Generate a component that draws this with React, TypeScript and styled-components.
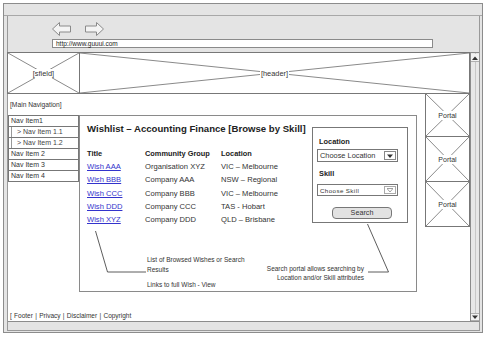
import React from "react";
import styled, { createGlobalStyle } from "styled-components";

const GlobalStyle = createGlobalStyle`
  html, body { margin: 0; padding: 0; background: #fff; }
  body { font-family: "Liberation Sans", Arial, sans-serif; color: #333; }
  * { box-sizing: border-box; }
`;

const Window = styled.div`
  margin: 3px 0 0 3px;
  width: 480px;
  height: 330px;
  border: 1px solid #8c8c8c;
  background: #e4e4e4;
  display: flex;
  flex-direction: column;
`;

const TitleBar = styled.div`
  height: 12px;
  border-bottom: 1px solid #a8a8a8;
`;

const Frame = styled.div`
  flex: 1;
  margin: 0 2px 1px 3px;
  border-left: 1px solid #999;
  border-right: 1px solid #999;
  border-bottom: 1px solid #999;
  display: flex;
  flex-direction: column;
`;

const Toolbar = styled.div`
  height: 36px;
  padding: 6px 0 0 44px;
  display: flex;
  flex-direction: column;
`;

const Arrows = styled.div`
  display: flex;
  gap: 14px;
  height: 14px;
`;

const UrlBox = styled.div`
  margin-top: 3px;
  width: 381px;
  height: 9px;
  border: 1px solid #8a8a8a;
  background: #fff;
  font-size: 6.5px;
  line-height: 7px;
  padding-left: 3px;
  color: #222;
`;

const Viewport = styled.div`
  flex: 1;
  display: flex;
  border-top: 1px solid #8c8c8c;
  min-height: 0;
`;

const Page = styled.div`
  flex: 1;
  background: #fff;
  display: flex;
  flex-direction: column;
`;

const VScroll = styled.div`
  width: 9px;
  border-left: 1px solid #8c8c8c;
  background: linear-gradient(to right, #e8e8e8 0 4px, #c8c8c8 4px 5px, #e8e8e8 5px);
  display: flex;
  flex-direction: column;
  justify-content: space-between;
  padding: 1px 0 0 0;
`;

const ScrollBtn = styled.div<{ $down?: boolean }>`
  height: 8px;
  background: #f2f2f2;
  border-bottom: 1px solid #b0b0b0;
  border-top: 1px solid ${(p) => (p.$down ? "#b0b0b0" : "transparent")};
  display: flex;
  align-items: center;
  justify-content: center;
`;

const HBar = styled.div`
  height: 9px;
  border-top: 1px solid #8c8c8c;
  background: #e4e4e4;
`;

const CrossBox = styled.div<{ $w?: number; $h?: number }>`
  position: relative;
  border: 1px solid #777;
  display: flex;
  align-items: center;
  justify-content: center;
  ${(p) => (p.$w ? `width: ${p.$w}px;` : "flex: 1;")}
  ${(p) => (p.$h ? `height: ${p.$h}px; flex: none;` : "")}
`;

const CrossLines = styled.svg`
  position: absolute;
  inset: 0;
  width: 100%;
  height: 100%;
`;

const BoxLabel = styled.span<{ $size?: number }>`
  position: relative;
  background: #fff;
  font-size: ${(p) => p.$size ?? 7}px;
  line-height: 9px;
  color: #333;
  padding: 0 1px;
`;

const HeaderRow = styled.div`
  height: 42px;
  display: flex;
  margin-left: -1px;
  margin-top: -1px;
`;

const Main = styled.div`
  flex: 1;
  display: flex;
`;

const LeftArea = styled.div`
  width: 417px;
  display: flex;
  flex-direction: column;
`;

const NavLabel = styled.div`
  margin-top: 7px;
  padding-left: 2px;
  height: 8px;
  font-size: 6.7px;
  line-height: 8px;
  color: #333;
`;

const Body = styled.div`
  margin-top: 6px;
  display: flex;
  align-items: flex-start;
`;

const Nav = styled.div`
  width: 71px;
  display: flex;
  flex-direction: column;
`;

const NavItem = styled.div<{ $sub?: boolean }>`
  height: 12px;
  margin-top: -1px;
  border: 1px solid #777;
  font-size: 7px;
  line-height: 10px;
  padding-left: ${(p) => (p.$sub ? 8 : 2)}px;
  color: ${(p) => (p.$sub ? "#444" : "#333")};
  box-shadow: ${(p) => (p.$sub ? "inset 2px 0 0 #fff, inset 3px 0 0 #999" : "none")};
  &:first-child { margin-top: 0; }
`;

const Panel = styled.div`
  position: relative;
  width: 338px;
  height: 177px;
  border: 1px solid #8a8a8a;
  display: flex;
  flex-direction: column;
`;

const TopRow = styled.div`
  display: flex;
  justify-content: space-between;
  padding: 0 8px 0 7px;
`;

const Listing = styled.div`
  display: flex;
  flex-direction: column;
`;

const Title = styled.div`
  margin-top: 7px;
  font-size: 9.6px;
  font-weight: bold;
  line-height: 12px;
  color: #222;
  white-space: nowrap;
`;

const Table = styled.div`
  margin-top: 12px;
  display: grid;
  grid-template-columns: 58px 76px auto;
  grid-auto-rows: 13.2px;
  font-size: 7.6px;
  line-height: 13.2px;
  color: #333;
`;

const HeadCell = styled.div`
  font-weight: bold;
  font-size: 7.4px;
  color: #222;
  height: 14px;
  line-height: 14px;
`;

const Cell = styled.div`
  white-space: nowrap;
`;

const WishLink = styled.a`
  color: #3333cc;
  text-decoration: underline;
`;

const SearchBox = styled.div`
  margin-top: 11px;
  width: 96px;
  height: 96px;
  border: 1px solid #777;
  display: flex;
  flex-direction: column;
  padding: 0 0 0 4px;
`;

const FieldLabel = styled.div<{ $top: number }>`
  margin-top: ${(p) => p.$top}px;
  padding-left: 2px;
  font-size: 7.4px;
  font-weight: bold;
  line-height: 8px;
  color: #222;
`;

const Select = styled.div<{ $top: number; $h: number; $small?: boolean }>`
  margin-top: ${(p) => p.$top}px;
  width: 81px;
  height: ${(p) => p.$h}px;
  border: 1px solid #777;
  display: flex;
  align-items: stretch;
  font-size: ${(p) => (p.$small ? 6.2 : 7.4)}px;
  letter-spacing: ${(p) => (p.$small ? 0.4 : 0)}px;
  color: #333;
`;

const SelectText = styled.div`
  flex: 1;
  padding-left: 2px;
  display: flex;
  align-items: center;
  white-space: nowrap;
`;

const SelectArrow = styled.div<{ $light?: boolean }>`
  width: 12px;
  margin: 1px;
  border: 1px solid ${(p) => (p.$light ? "#aaa" : "#888")};
  display: flex;
  align-items: center;
  justify-content: center;
  background: #fff;
`;

const SearchButton = styled.div`
  margin: 11px 0 0 15px;
  width: 60px;
  height: 12px;
  border: 1px solid #777;
  border-radius: 4px;
  background: #e2e2e2;
  font-size: 7.2px;
  line-height: 10px;
  text-align: center;
  color: #333;
`;

const Notes = styled.div`
  display: flex;
  justify-content: space-between;
  align-items: flex-start;
  padding: 0 52px 0 67px;
  font-size: 6.5px;
  color: #333;
`;

const LeftNote = styled.div`
  margin-top: 29px;
  line-height: 9.5px;
`;

const NoteGap = styled.div`
  margin-top: 6px;
`;

const RightNote = styled.div`
  margin-top: 39px;
  line-height: 8.5px;
  text-align: right;
`;

const Leaders = styled.svg`
  position: absolute;
  left: -1px;
  top: -1px;
  width: 338px;
  height: 177px;
  pointer-events: none;
`;

const PortalColumn = styled.div`
  margin-left: auto;
  margin-top: -1px;
  width: 45px;
  display: flex;
  flex-direction: column;
`;

const Footer = styled.div`
  height: 10px;
  padding-left: 2px;
  font-size: 6.5px;
  line-height: 9px;
  color: #333;
  word-spacing: 0.5px;
`;

function Cross() {
  return (
    <CrossLines viewBox="0 0 100 100" preserveAspectRatio="none">
      <line x1="0" y1="0" x2="100" y2="100" stroke="#8a8a8a" strokeWidth="1" vectorEffect="non-scaling-stroke" />
      <line x1="100" y1="0" x2="0" y2="100" stroke="#8a8a8a" strokeWidth="1" vectorEffect="non-scaling-stroke" />
    </CrossLines>
  );
}

function Arrow({ flip }: { flip?: boolean }) {
  return (
    <svg width="19" height="14" viewBox="0 0 19 14">
      <polygon
        points={flip ? "18.5,7 11.5,0.5 11.5,4 0.5,4 0.5,10 11.5,10 11.5,13.5" : "0.5,7 7.5,0.5 7.5,4 18.5,4 18.5,10 7.5,10 7.5,13.5"}
        fill="#f4f4f4"
        stroke="#8a8a8a"
        strokeWidth="1"
      />
    </svg>
  );
}

function Triangle({ up, light }: { up?: boolean; light?: boolean }) {
  return (
    <svg width="6" height="4" viewBox="0 0 6 4">
      <polygon
        points={up ? "0,4 3,0.5 6,4" : "0,0.5 6,0.5 3,4"}
        fill={light ? "#fff" : "#333"}
        stroke={light ? "#888" : "none"}
        strokeWidth="0.8"
      />
    </svg>
  );
}

const wishes = [
  { title: "Wish AAA", group: "Organisation XYZ", location: "VIC – Melbourne" },
  { title: "Wish BBB", group: "Company AAA", location: "NSW – Regional" },
  { title: "Wish CCC", group: "Company BBB", location: "VIC – Melbourne" },
  { title: "Wish DDD", group: "Company CCC", location: "TAS - Hobart" },
  { title: "Wish XYZ", group: "Company DDD", location: "QLD – Brisbane" },
];

const navItems = [
  { label: "Nav Item1" },
  { label: "> Nav Item 1.1", sub: true },
  { label: "> Nav Item 1.2", sub: true },
  { label: "Nav Item 2" },
  { label: "Nav Item 3" },
  { label: "Nav Item 4" },
];

export default function App() {
  return (
    <>
      <GlobalStyle />
      <Window>
        <TitleBar />
        <Frame>
          <Toolbar>
            <Arrows>
              <Arrow />
              <Arrow flip />
            </Arrows>
            <UrlBox>http://www.guuui.com</UrlBox>
          </Toolbar>
          <Viewport>
            <Page>
              <HeaderRow>
                <CrossBox $w={73}>
                  <Cross />
                  <BoxLabel $size={7.4}>[sfield]</BoxLabel>
                </CrossBox>
                <CrossBox style={{ marginLeft: -1 }}>
                  <Cross />
                  <BoxLabel $size={7.4}>[header]</BoxLabel>
                </CrossBox>
              </HeaderRow>
              <Main>
                <LeftArea>
                  <NavLabel>[Main Navigation]</NavLabel>
                  <Body>
                    <Nav>
                      {navItems.map((n) => (
                        <NavItem key={n.label} $sub={n.sub}>
                          {n.label}
                        </NavItem>
                      ))}
                    </Nav>
                    <Panel>
                      <TopRow>
                        <Listing>
                          <Title>Wishlist – Accounting Finance [Browse by Skill]</Title>
                          <Table>
                            <HeadCell>Title</HeadCell>
                            <HeadCell>Community Group</HeadCell>
                            <HeadCell>Location</HeadCell>
                            {wishes.map((w) => (
                              <React.Fragment key={w.title}>
                                <Cell>
                                  <WishLink>{w.title}</WishLink>
                                </Cell>
                                <Cell>{w.group}</Cell>
                                <Cell>{w.location}</Cell>
                              </React.Fragment>
                            ))}
                          </Table>
                        </Listing>
                        <SearchBox>
                          <FieldLabel $top={10}>Location</FieldLabel>
                          <Select $top={3} $h={13}>
                            <SelectText>Choose Location</SelectText>
                            <SelectArrow>
                              <Triangle />
                            </SelectArrow>
                          </Select>
                          <FieldLabel $top={8}>Skill</FieldLabel>
                          <Select $top={6} $h={12} $small>
                            <SelectText>Choose Skill</SelectText>
                            <SelectArrow $light>
                              <Triangle light />
                            </SelectArrow>
                          </Select>
                          <SearchButton>Search</SearchButton>
                        </SearchBox>
                      </TopRow>
                      <Notes>
                        <LeftNote>
                          List of Browsed Wishes or Search
                          <br />
                          Results
                          <NoteGap>Links to full Wish - View</NoteGap>
                        </LeftNote>
                        <RightNote>
                          Search portal allows searching by
                          <br />
                          Location and/or Skill attributes
                        </RightNote>
                      </Notes>
                      <Leaders viewBox="0 0 338 177">
                        <polyline points="16.5,116 28.5,157 67,157" fill="none" stroke="#333" strokeWidth="0.8" />
                        <polyline points="288.5,109 309.5,157 289,157" fill="none" stroke="#333" strokeWidth="0.8" />
                      </Leaders>
                    </Panel>
                  </Body>
                </LeftArea>
                <PortalColumn>
                  {[0, 1, 2].map((i) => (
                    <CrossBox key={i} $h={i === 0 ? 44 : 46} style={{ marginTop: i === 0 ? 0 : -1 }}>
                      <Cross />
                      <BoxLabel $size={7}>Portal</BoxLabel>
                    </CrossBox>
                  ))}
                </PortalColumn>
              </Main>
              <Footer>[ Footer | Privacy | Disclaimer | Copyright</Footer>
            </Page>
            <VScroll>
              <ScrollBtn>
                <Triangle up />
              </ScrollBtn>
              <ScrollBtn $down>
                <Triangle />
              </ScrollBtn>
            </VScroll>
          </Viewport>
          <HBar />
        </Frame>
      </Window>
    </>
  );
}
